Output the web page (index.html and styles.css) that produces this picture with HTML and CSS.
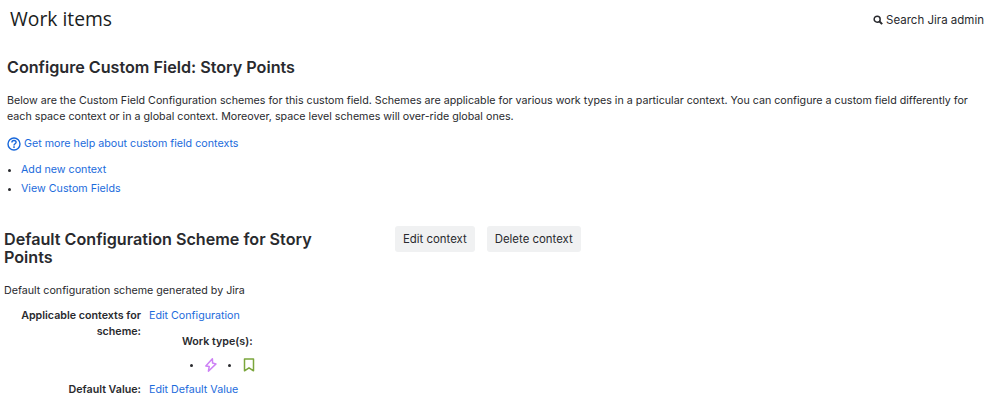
FILE: index.html
```html
<!DOCTYPE html>
<html lang="en">
<head>
<meta charset="utf-8">
<title>Work items</title>
<link rel="stylesheet" href="styles.css">
</head>
<body>
<header class="topbar">
  <h1 class="page-title">Work items</h1>
  <a class="admin-search" href="#">
    <svg class="search-icon" width="10" height="10" viewBox="0 0 12 12" aria-hidden="true"><circle cx="5" cy="5" r="3.6" fill="none" stroke="#292a2e" stroke-width="1.8"/><path d="M7.5 7.5L11 11" stroke="#292a2e" stroke-width="2.4"/></svg>
    <span>Search Jira admin</span>
  </a>
</header>
<main class="content">
  <section class="intro">
    <h2 class="section-title">Configure Custom Field: Story Points</h2>
    <p class="description">Below are the Custom Field Configuration schemes for this custom field. Schemes are applicable for various work types in a particular context. You can configure a custom field differently for each space context or in a global context. Moreover, space level schemes will over-ride global ones.</p>
    <p class="help"><a href="#" class="link help-link">
      <svg width="14" height="14" viewBox="0 0 14 14" aria-hidden="true"><circle cx="7" cy="7" r="6" fill="none" stroke="#1868db" stroke-width="1.4"/><path d="M4.9 5.4C4.9 4.2 5.9 3.5 7 3.5S9.1 4.3 9.1 5.3C9.1 6.8 7 6.7 7 8.4" fill="none" stroke="#1868db" stroke-width="1.4"/><rect x="6.2" y="9.3" width="1.6" height="1.6" fill="#1868db"/></svg>
      Get more help about custom field contexts</a></p>
    <ul class="actions">
      <li><a href="#" class="link">Add new context</a></li>
      <li><a href="#" class="link">View Custom Fields</a></li>
    </ul>
  </section>
  <section class="scheme">
    <div class="scheme-head">
      <h2 class="scheme-title">Default Configuration Scheme for Story Points</h2>
      <div class="scheme-buttons">
        <a href="#" class="btn">Edit context</a>
        <a href="#" class="btn">Delete context</a>
      </div>
    </div>
    <p class="scheme-desc">Default configuration scheme generated by Jira</p>
    <dl class="props">
      <dt>Applicable contexts for scheme:</dt>
      <dd>
        <a href="#" class="link">Edit Configuration</a>
        <div class="types">
          <strong class="types-label">Work type(s):</strong>
          <ul class="type-list">
            <li><svg width="16" height="16" viewBox="0 0 16 16" aria-hidden="true"><path d="M9.4 1.8L2.8 8.9L6.2 9.6L5.4 14.2L13 6.9L9.6 6.1Z" fill="none" stroke="#cd82f5" stroke-width="1.5" stroke-linejoin="round"/></svg></li>
            <li><svg width="16" height="16" viewBox="0 0 16 16" aria-hidden="true"><path d="M3.5 2H12.5V13.8L8 10.8L3.5 13.8Z" fill="none" stroke="#7ba63c" stroke-width="1.5" stroke-linejoin="round"/></svg></li>
          </ul>
        </div>
      </dd>
      <dt>Default Value:</dt>
      <dd><a href="#" class="link">Edit Default Value</a></dd>
    </dl>
  </section>
</main>
</body>
</html>
```
FILE: styles.css
```css
html, body { margin: 0; padding: 0; }
body {
  width: 998px;
  height: 402px;
  overflow: hidden;
  background: #fff;
  color: #292a2e;
  font: 10.7px/16px Inter, "Liberation Sans", sans-serif;
}
.topbar {
  display: flex;
  justify-content: space-between;
  align-items: center;
  padding: 4px 14px 0 10px;
  height: 30px;
}
.page-title {
  margin: 0;
  font: 500 19.3px/28px "Open Sans", sans-serif;
  color: #1a1d21;
}
.admin-search {
  display: flex;
  align-items: center;
  gap: 3px;
  padding-top: 2px;
  font-size: 11.5px;
  color: #292a2e;
  text-decoration: none;
}
.content { padding: 0 0 0 4px; }
.intro { padding: 0 3px; }
.section-title {
  margin: 21px 0 0;
  font-size: 16.15px;
  font-weight: 600;
  line-height: 24px;
}
.description { margin: 14px 0 0; }
.help { margin: 11px 0 0; }
.link { color: #1c6bdc; text-decoration: none; }
.help-link { display: inline-flex; align-items: center; gap: 3px; }
.actions { margin: 4px 0 0; padding: 0 0 0 14px; }
.actions li { line-height: 19px; }
.scheme { margin-top: 32px; }
.scheme-head { display: flex; align-items: flex-start; }
.scheme-title {
  width: 340px;
  margin: 0;
  font-size: 16.15px;
  font-weight: 600;
  line-height: 18px;
}
.scheme-buttons { display: flex; gap: 12px; margin-left: 51px; margin-top: -4px; }
.btn {
  padding: 5px 8px;
  background: #f0f1f2;
  border-radius: 3px;
  color: #292a2e;
  text-decoration: none;
  font-size: 11.4px;
  line-height: 16px;
}
.scheme-desc { margin: 17px 0 0; }
.props {
  display: grid;
  grid-template-columns: 137px 1fr;
  column-gap: 8px;
  margin: 9px 0 0;
}
.props dt { font-weight: 600; text-align: right; }
.props dd { margin: 0; }
.types { padding-left: 33px; margin-top: 10px; }
.types-label { display: block; font-weight: 600; line-height: 16px; }
.type-list { display: flex; margin: 7px 0 9px; padding: 0 0 0 21px; gap: 22px; list-style: none; }
.type-list li { display: list-item; list-style: disc; margin-left: 0; }
.type-list svg { display: block; }
```
